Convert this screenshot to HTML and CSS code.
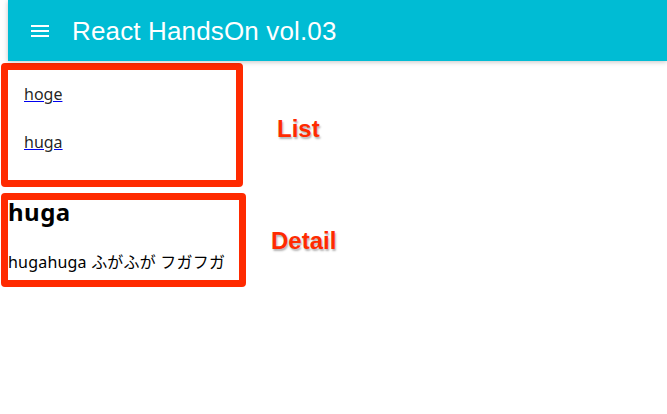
FILE: index.html
```html
<!DOCTYPE html>
<html lang="ja">
<head>
<meta charset="utf-8">
<title>React HandsOn vol.03</title>
<link rel="stylesheet" href="styles.css">
</head>
<body>
<header class="app-bar">
  <svg class="menu-icon" viewBox="0 0 24 24" width="24" height="24" aria-hidden="true"><path fill="#fff" d="M3 18h18v-2H3v2zm0-5h18v-2H3v2zm0-7v2h18V6H3z"/></svg>
  <h1 class="app-title">React HandsOn vol.03</h1>
</header>
<main class="content">
  <section class="row">
    <ul class="list-box">
      <li class="list-item"><a class="item-link" href="#hoge"><span class="item-text">hoge</span></a></li>
      <li class="list-item"><a class="item-link" href="#huga"><span class="item-text">huga</span></a></li>
    </ul>
    <span class="note note-list">List</span>
  </section>
  <section class="row">
    <div class="detail-box">
      <h2 class="detail-title">huga</h2>
      <p class="detail-body">hugahuga ふがふが フガフガ</p>
    </div>
    <span class="note note-detail">Detail</span>
  </section>
</main>
</body>
</html>
```
FILE: styles.css
```css
html, body {
  margin: 0;
  padding: 0;
  background: #fff;
}
body {
  font-family: "Noto Sans", "Noto Sans CJK JP", sans-serif;
  color: #000;
}
.app-bar {
  margin-left: 8px;
  height: 61px;
  background: #00bcd4;
  display: flex;
  align-items: center;
  padding-left: 20px;
  box-shadow: 0 1px 6px rgba(0,0,0,0.12), 0 1px 4px rgba(0,0,0,0.12);
  position: relative;
  z-index: 1;
}
.menu-icon {
  display: block;
  flex: none;
}
.app-title {
  margin: 0 0 0 20px;
  font-family: "Liberation Sans", Arial, sans-serif;
  font-weight: 400;
  font-size: 26px;
  letter-spacing: 0.15px;
  color: #fff;
  line-height: 30px;
}
.content {
  padding: 2px 0 0 1px;
}
.row {
  display: flex;
  align-items: flex-start;
}
.list-box {
  list-style: none;
  margin: 0;
  padding: 0 0 14px 0;
  width: 228px;
  border: 7px solid #ff2a00;
  border-radius: 4px;
}
.list-item {
  padding: 12px 16px;
  line-height: 24px;
  font-size: 16px;
}
.item-link {
  color: #0000ee;
  text-decoration: underline;
  text-decoration-color: #0000ee;
}
.item-text {
  color: rgba(0,0,0,0.87);
}
.note {
  font-family: "Liberation Sans", Arial, sans-serif;
  font-weight: 700;
  font-size: 24px;
  line-height: 28px;
  color: #ff2a00;
  text-shadow: 1px 2px 2px rgba(0,0,0,0.3);
}
.note-list {
  margin: 52px 0 0 34px;
}
.detail-box {
  margin-top: 6px;
  width: 231px;
  border: 7px solid #ff2a00;
  border-radius: 4px;
  padding: 0 0 6px 0;
}
.note-detail {
  margin: 40px 0 0 25px;
}
.detail-title {
  margin: 0;
  font-size: 24px;
  line-height: 24px;
  font-weight: 700;
  letter-spacing: 0.5px;
}
.detail-body {
  margin: 26px 0 0 0;
  font-size: 16px;
  line-height: 24px;
  letter-spacing: 0.2px;
}
```
